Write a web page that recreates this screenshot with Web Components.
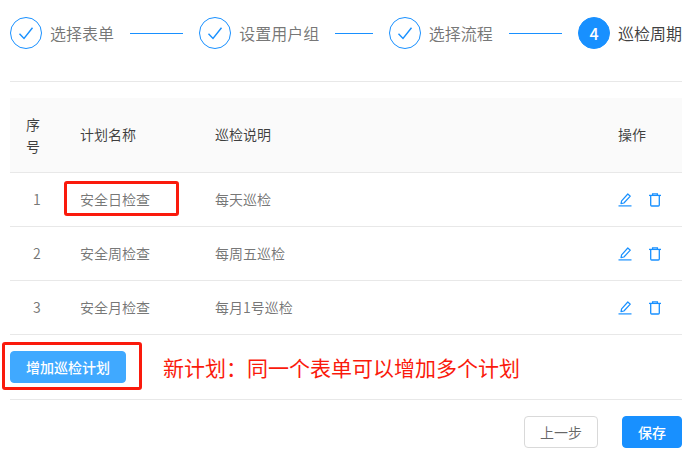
<!DOCTYPE html>
<html lang="zh">
<head>
<meta charset="utf-8">
<title>巡检周期</title>
<style>
    html, body { margin: 0; background: #fff; }
    body { font-family: "Noto Sans CJK SC", "Noto Sans", sans-serif; font-size: 14px; }
</style>
</head>
<body>
<plan-page>
    <step-bar>
        <step-item label="选择表单" done></step-item>
        <step-item label="设置用户组" done></step-item>
        <step-item label="选择流程" done></step-item>
        <step-item label="巡检周期" num="4" last></step-item>
    </step-bar>

    <plan-table>
        <plan-row head no="序号" name="计划名称" desc="巡检说明"><span>操作</span></plan-row>
        <plan-row no="1" name="安全日检查" desc="每天巡检"><row-actions></row-actions></plan-row>
        <plan-row no="2" name="安全周检查" desc="每周五巡检"><row-actions></row-actions></plan-row>
        <plan-row no="3" name="安全月检查" desc="每月1号巡检"><row-actions></row-actions></plan-row>
    </plan-table>

    <add-bar note="新计划:同一个表单可以增加多个计划">增加巡检计划</add-bar>

    <form-footer></form-footer>

    <mark-box style="left:64px;top:181px;width:115px;height:35px"></mark-box>
    <mark-box style="left:2px;top:342px;width:140px;height:48px"></mark-box>
</plan-page>

<script>
// PAGE
class PlanPage extends HTMLElement {
    constructor() {
        super();
        this.attachShadow({ mode: "open" });
        this.shadowRoot.innerHTML = `
            <style>
                :host {
                    display: block;
                    position: relative;
                    box-sizing: border-box;
                    width: 698px;
                    height: 460px;
                    padding: 17px 16px 0 10px;
                    overflow: hidden;
                }
            </style>
            <slot></slot>
        `;
    }
}
customElements.define("plan-page", PlanPage);


// STEPS
class StepBar extends HTMLElement {
    constructor() {
        super();
        this.attachShadow({ mode: "open" });
        this.shadowRoot.innerHTML = `
            <style>
                :host {
                    display: flex;
                    gap: 16px;
                    height: 32px;
                    padding-bottom: 32px;
                    border-bottom: 1px solid #e8e8e8;
                }
            </style>
            <slot></slot>
        `;
    }
}
customElements.define("step-bar", StepBar);

class StepItem extends HTMLElement {
    connectedCallback() {
        if (this.shadowRoot) return;
        this.attachShadow({ mode: "open" });
        const done = this.hasAttribute("done");
        const check = `<svg width="16" height="14" viewBox="0 0 16 14" fill="none" stroke="#1890ff" stroke-width="1.4"><path d="M1.5 7.8 6 12.4 14.5 1.8"/></svg>`;
        this.shadowRoot.innerHTML = `
            <style>
                :host {
                    display: flex;
                    align-items: center;
                    flex: ${this.hasAttribute("last") ? "none" : "1"};
                    height: 32px;
                }
                .dot {
                    flex: none;
                    box-sizing: border-box;
                    width: 32px;
                    height: 32px;
                    border-radius: 50%;
                    border: 1px solid #1890ff;
                    display: flex;
                    align-items: center;
                    justify-content: center;
                    font-size: 16px;
                    font-weight: 500;
                    color: #fff;
                    background: ${done ? "#fff" : "#1890ff"};
                }
                .label {
                    flex: none;
                    margin-left: 8px;
                    font-size: 16px;
                    line-height: 32px;
                    color: ${done ? "rgba(0,0,0,.55)" : "rgba(0,0,0,.75)"};
                }
                .line { flex: 1; height: 1px; margin-left: 16px; background: #1890ff; }
            </style>
            <div class="dot">${done ? check : this.getAttribute("num")}</div>
            <div class="label">${this.getAttribute("label")}</div>
            ${this.hasAttribute("last") ? "" : `<div class="line"></div>`}
        `;
    }
}
customElements.define("step-item", StepItem);


// TABLE
class PlanTable extends HTMLElement {
    constructor() {
        super();
        this.attachShadow({ mode: "open" });
        this.shadowRoot.innerHTML = `
            <style>
                :host { display: block; margin-top: 16px; }
            </style>
            <slot></slot>
        `;
    }
}
customElements.define("plan-table", PlanTable);

class PlanRow extends HTMLElement {
    connectedCallback() {
        if (this.shadowRoot) return;
        this.attachShadow({ mode: "open" });
        const head = this.hasAttribute("head");
        this.shadowRoot.innerHTML = `
            <style>
                :host {
                    display: grid;
                    grid-template-columns: 54px 135px 1fr 80px;
                    align-items: center;
                    box-sizing: border-box;
                    height: ${head ? 75 : 54}px;
                    border-bottom: 1px solid #e8e8e8;
                    background: ${head ? "#fafafa" : "#fff"};
                    font-size: 14px;
                    line-height: 22px;
                    color: ${head ? "rgba(0,0,0,.75)" : "rgba(0,0,0,.55)"};
                }
                .no { padding: 0 16px ${head ? 0 : 2}px; text-align: ${head ? "left" : "center"}; }
                .cell { padding: 0 16px 2px; }
                .act { padding: 0 16px; }
            </style>
            <div class="no">${this.getAttribute("no")}</div>
            <div class="cell">${this.getAttribute("name")}</div>
            <div class="cell">${this.getAttribute("desc")}</div>
            <div class="${head ? "cell" : "act"}"><slot></slot></div>
        `;
    }
}
customElements.define("plan-row", PlanRow);

class RowActions extends HTMLElement {
    constructor() {
        super();
        this.attachShadow({ mode: "open" });
        this.shadowRoot.innerHTML = `
            <style>
                :host { display: flex; align-items: center; gap: 16px; height: 22px; }
                svg { display: block; flex: none; }
            </style>
            <svg width="14" height="14" viewBox="0 0 14 14" fill="none" stroke="#1890ff" stroke-width="1.2">
                <path d="M0.5 12.9H13.5"/>
                <path d="M3 10.6 3.6 7.8 9.8 1 12.3 3.2 5.9 10Z" stroke-linejoin="round"/>
            </svg>
            <svg width="14" height="14" viewBox="0 0 14 14" fill="none" stroke="#1890ff" stroke-width="1.3">
                <path d="M1 2.4H13"/>
                <path d="M4.6 2.4V0.8H9.4V2.4"/>
                <path d="M2.7 2.4V12Q2.7 13 3.7 13H10.3Q11.3 13 11.3 12V2.4"/>
            </svg>
        `;
    }
}
customElements.define("row-actions", RowActions);


// BUTTON
class AppButton extends HTMLElement {
    connectedCallback() {
        if (this.shadowRoot) return;
        this.attachShadow({ mode: "open" });
        const kind = this.getAttribute("kind") || "default";
        const looks = {
            default: "background:#fff;color:rgba(0,0,0,.6);border:1px solid #d9d9d9;",
            primary: "background:#1890ff;color:#fff;border:1px solid #1890ff;font-weight:500;",
            light: "background:#40a9ff;color:#fff;border:1px solid #40a9ff;font-weight:500;"
        };
        this.shadowRoot.innerHTML = `
            <style>
                :host {
                    display: flex;
                    align-items: center;
                    justify-content: center;
                    box-sizing: border-box;
                    height: 32px;
                    border-radius: 4px;
                    font-size: 14px;
                    ${looks[kind]}
                }
            </style>
            <slot></slot>
        `;
    }
}
customElements.define("app-button", AppButton);


// TOOLBAR UNDER THE TABLE
class AddBar extends HTMLElement {
    connectedCallback() {
        if (this.shadowRoot) return;
        this.attachShadow({ mode: "open" });
        this.shadowRoot.innerHTML = `
            <style>
                :host {
                    display: flex;
                    align-items: center;
                    gap: 37px;
                    padding: 16px 0;
                    border-bottom: 1px solid #e8e8e8;
                }
                app-button { width: 116px; }
                .note { font-size: 21px; line-height: 32px; color: #fa1a0c; white-space: nowrap; }
            </style>
            <app-button kind="light"><slot></slot></app-button>
            <div class="note">${this.getAttribute("note").replace(":", "\uFF1A")}</div>
        `;
    }
}
customElements.define("add-bar", AddBar);


// FOOTER
class FormFooter extends HTMLElement {
    constructor() {
        super();
        this.attachShadow({ mode: "open" });
        this.shadowRoot.innerHTML = `
            <style>
                :host {
                    display: flex;
                    justify-content: flex-end;
                    gap: 24px;
                    padding-top: 16px;
                }
                .prev { width: 74px; }
                .save { width: 60px; }
            </style>
            <app-button class="prev">上一步</app-button>
            <app-button class="save" kind="primary">保存</app-button>
        `;
    }
}
customElements.define("form-footer", FormFooter);


// RED MARK DRAWN OVER THE SCREENSHOT
class MarkBox extends HTMLElement {
    constructor() {
        super();
        this.attachShadow({ mode: "open" });
        this.shadowRoot.innerHTML = `
            <style>
                :host {
                    position: absolute;
                    box-sizing: border-box;
                    border: 3px solid #fa1a0c;
                    border-radius: 3px;
                    pointer-events: none;
                }
            </style>
        `;
    }
}
customElements.define("mark-box", MarkBox);
</script>
</body>
</html>
